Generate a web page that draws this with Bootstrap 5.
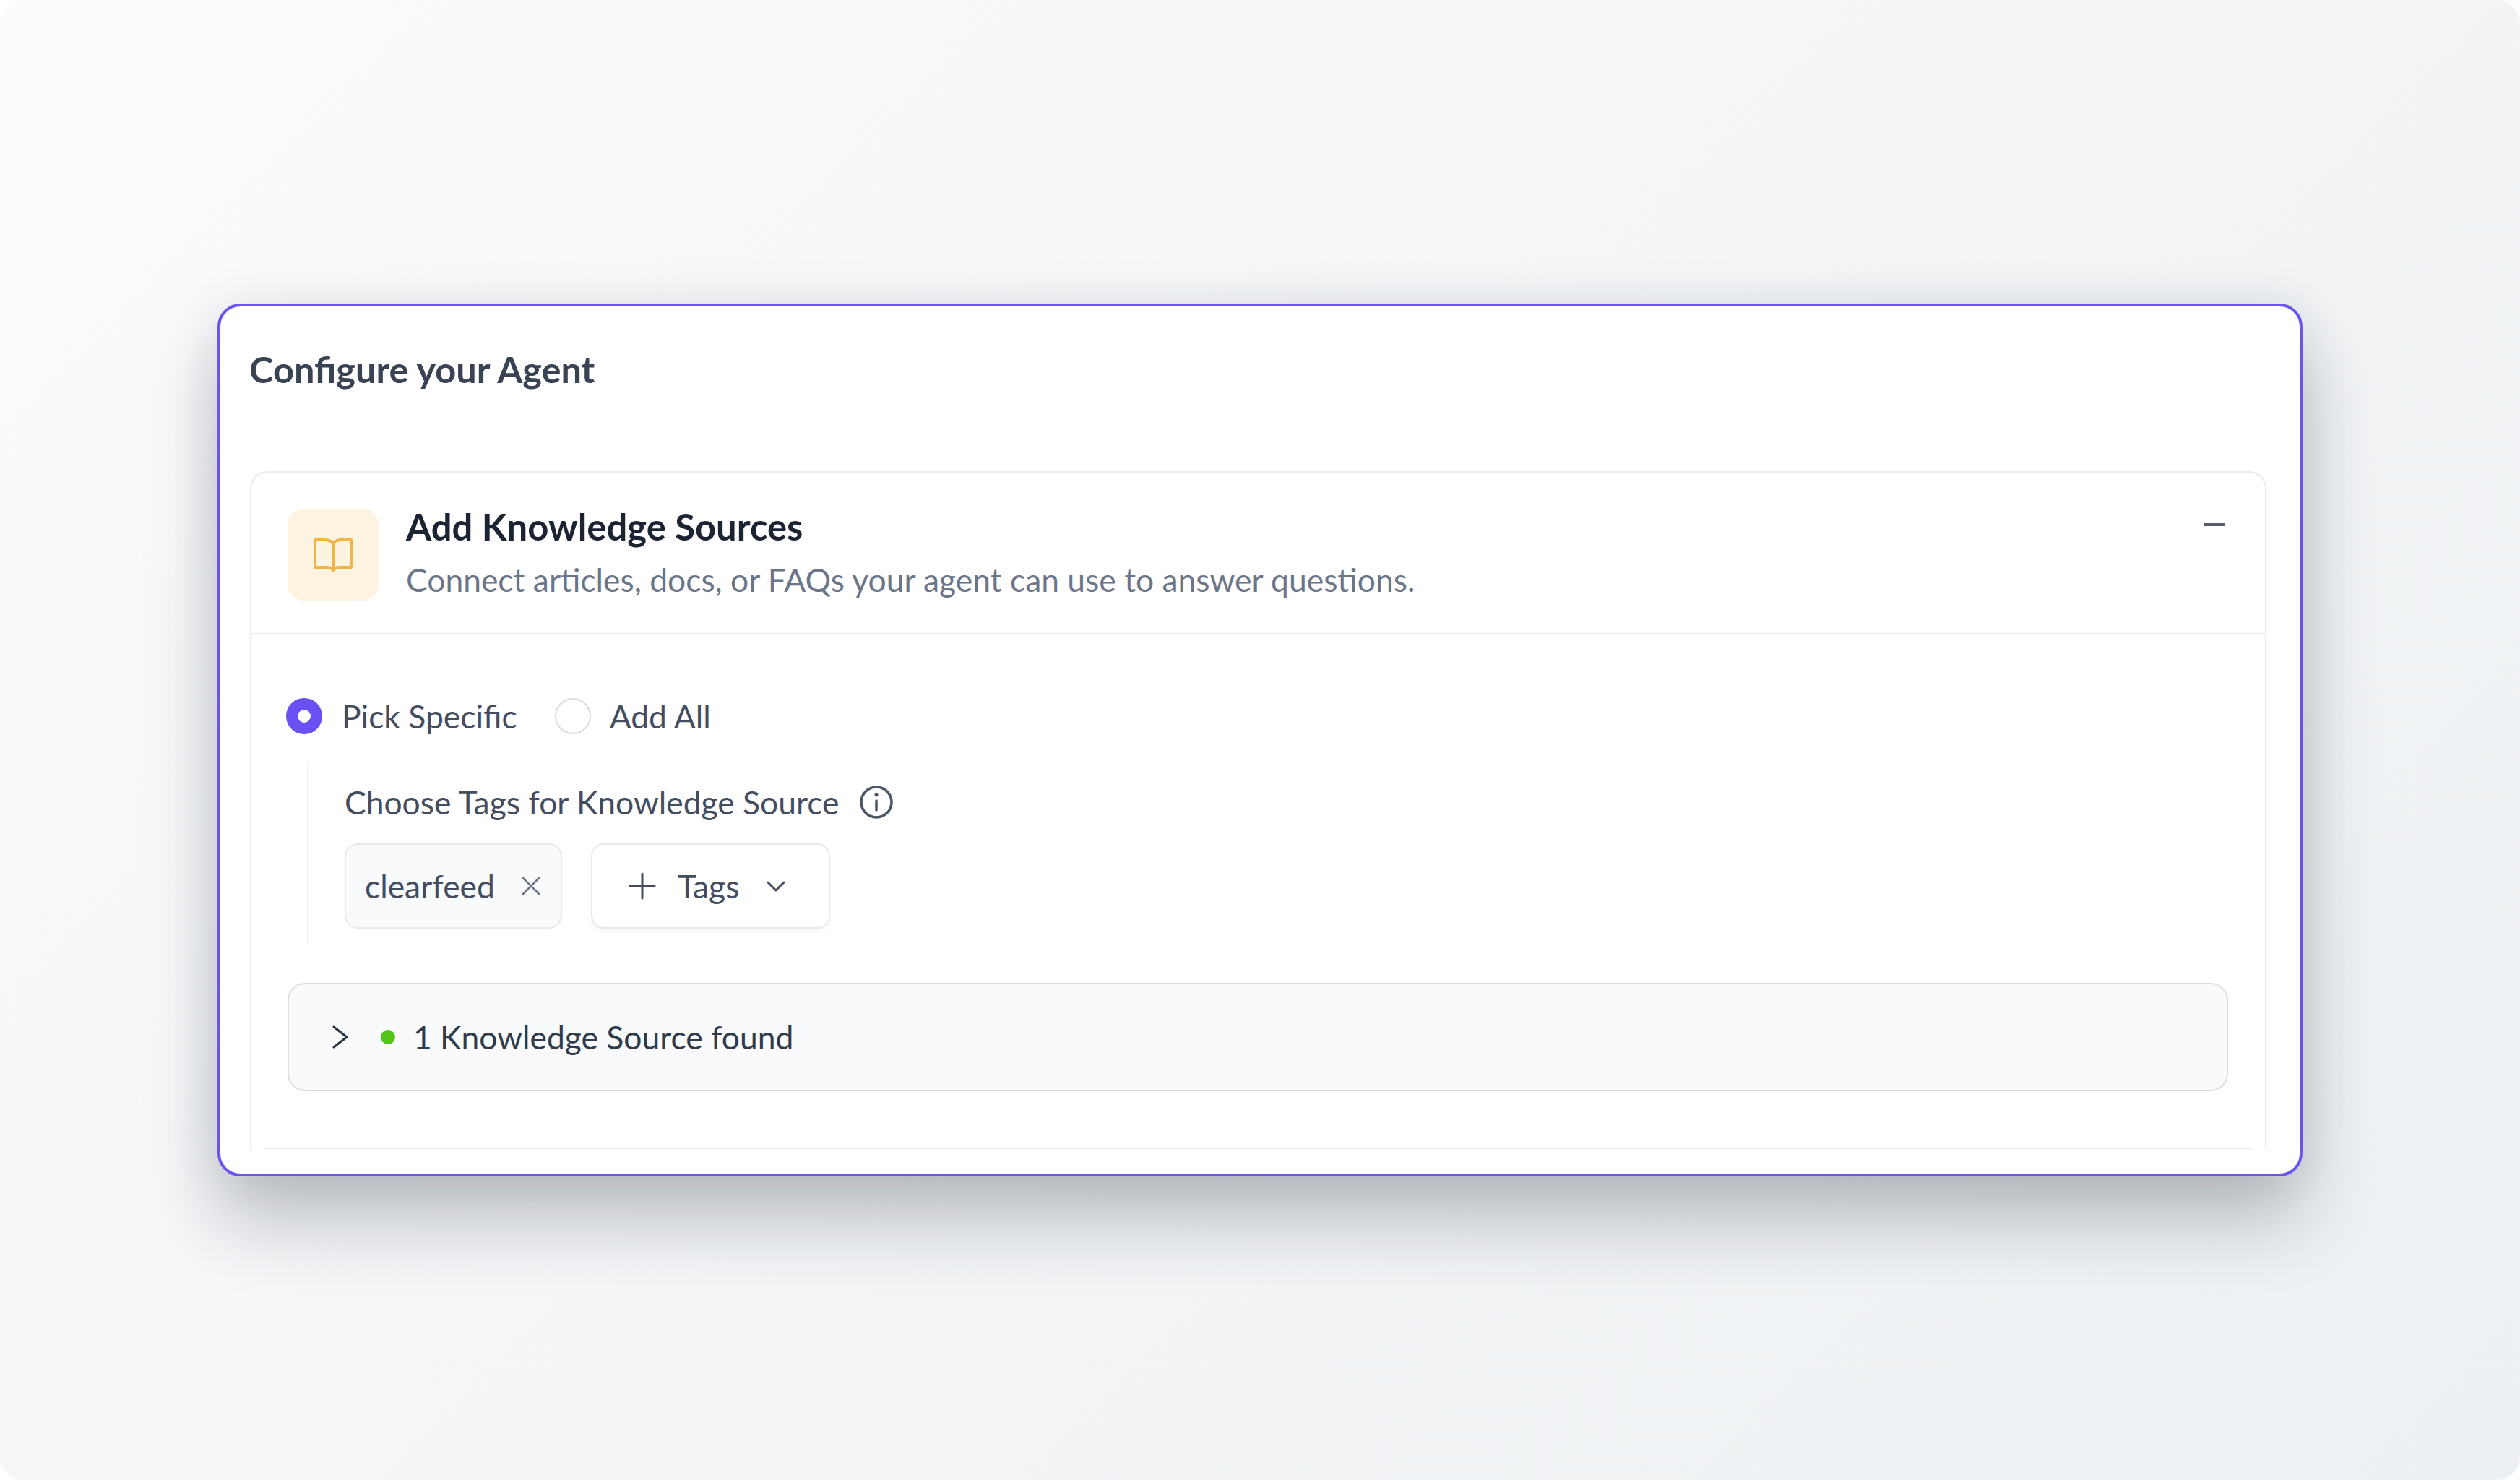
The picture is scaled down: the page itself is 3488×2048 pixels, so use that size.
<!DOCTYPE html>
<html lang="en">
  <head>
    <meta charset="UTF-8" />
    <meta name="viewport" content="width=device-width, initial-scale=1" />
    <title>Configure your Agent</title>
    <link href="https://cdn.jsdelivr.net/npm/bootstrap@5.3.2/dist/css/bootstrap.min.css" rel="stylesheet" />
    <style>
      body {
        background-color: #fff;
        font-family: "Lato", "Liberation Sans", sans-serif;
      }
      .stage {
        height: 2048px;
        border-radius: 32px;
        background: linear-gradient(135deg, #fbfcfd 0%, #f3f5f7 50%, #edf0f2 100%);
      }
      .agent-panel {
        width: 2886px;
        height: 1208px;
        background: #fff;
        border: 4px solid #6b55ec;
        border-radius: 32px;
        padding: 0 46px 0 41px;
        box-shadow: 0 60px 100px rgba(40, 45, 60, 0.28), 0 0 70px rgba(40, 45, 60, 0.08);
      }
      .panel-title {
        height: 228px;
        padding-top: 57px;
        font-size: 50.5px;
        line-height: 60px;
        font-weight: 700;
        color: #3a4354;
        margin: 0 0 0 -1px;
      }
      .source-box {
        position: relative;
        height: 938px;
        border: solid #e9ebee;
        border-width: 2px 2px 0;
        border-top-left-radius: 24px;
        border-top-right-radius: 24px;
      }
      .source-box::after {
        content: "";
        position: absolute;
        left: 18px;
        right: 16px;
        bottom: 0;
        height: 2px;
        background: #e9ebee;
      }
      .source-head {
        height: 224px;
        padding: 50px 55px 0 50px;
        border-bottom: 2px solid #e9ebee;
        gap: 38px;
      }
      .tile {
        width: 126px;
        height: 127px;
        border-radius: 22px;
        background: #fdf3e1;
      }
      .head-text {
        margin-top: -5px;
      }
      .head-title {
        font-size: 50.8px;
        line-height: 60px;
        font-weight: 700;
        color: #1c2333;
        margin: 0 0 15px;
      }
      .head-sub {
        font-size: 44.4px;
        line-height: 56px;
        color: #6b7588;
        margin: 0;
      }
      .minus-mark {
        width: 29px;
        height: 4px;
        background: #585e69;
        margin-top: 20px;
      }
      .source-body {
        padding: 87px 50px 0;
      }
      .radio-row {
        height: 52px;
        margin-left: -2px;
        font-size: 44.4px;
        color: #444d5e;
      }
      .radio-dot {
        width: 50px;
        height: 50px;
        border-radius: 50%;
        margin-right: 27px;
      }
      .radio-on {
        border: 16px solid #6a4ff2;
        background: #fff;
      }
      .radio-off {
        border: 2px solid #d9dbdf;
        background: #fff;
        margin-left: 52px;
        margin-right: 26px;
      }
      .tag-group {
        margin: 36px 0 0 27px;
        padding-left: 50px;
        height: 253px;
        border-left: 2px solid #eceef0;
        color: #444d5e;
        font-size: 44.4px;
      }
      .tag-label {
        height: 56px;
        line-height: 56px;
        margin-top: 30px;
        padding-top: 29px;
        box-sizing: content-box;
      }
      .tag-row {
        margin-top: 29px;
        gap: 40px;
      }
      .tag-chip {
        height: 118px;
        border: 2px solid #e7e9ed;
        border-radius: 18px;
        background: #f8fafc;
        padding: 0 28px 0 26px;
        color: #444d5e;
        font-size: 44.4px;
      }
      .tag-btn {
        background: #fff;
        padding: 0 60px 0 50px;
        box-shadow: 0 4px 8px rgba(30, 40, 60, 0.04);
      }
      .info-mark {
        margin-left: 28px;
      }
      .chip-close {
        margin-left: 37px;
      }
      .tag-word {
        margin: 0 38px 0 30px;
      }
      .found-row {
        width: 2686px;
        height: 150px;
        margin-top: 54px;
        border: 2px solid #dcdee0;
        border-radius: 24px;
        background: #f9fafc;
        padding-left: 59px;
        font-size: 44.4px;
        color: #2f3a4b;
      }
      .live-dot {
        width: 20px;
        height: 20px;
        border-radius: 50%;
        background: #52c41a;
        margin: 0 25px 0 44px;
      }
    </style>
  </head>
  <body class="m-0">
    <div class="stage d-flex align-items-center justify-content-center">
      <div class="agent-panel">
        <h1 class="panel-title">Configure your Agent</h1>
        <div class="source-box">
          <div class="source-head d-flex align-items-start">
            <div class="tile d-flex align-items-center justify-content-center flex-shrink-0">
              <svg width="56" height="46" viewBox="0 0 56 46" fill="none" stroke="#f2b544" stroke-width="4" stroke-linejoin="round" stroke-linecap="round">
                <path d="M28 7C25 3 21 2 16 2H3v38h15c5 0 8 1 10 4 2-3 5-4 10-4h15V2H40c-5 0-9 1-12 5z" />
                <path d="M28 7v37" />
              </svg>
            </div>
            <div class="head-text flex-grow-1">
              <h2 class="head-title">Add Knowledge Sources</h2>
              <p class="head-sub">Connect articles, docs, or FAQs your agent can use to answer questions.</p>
            </div>
            <div class="minus-mark"></div>
          </div>
          <div class="source-body">
            <div class="radio-row d-flex align-items-center">
              <span class="radio-dot radio-on"></span>
              <span>Pick Specific</span>
              <span class="radio-dot radio-off"></span>
              <span>Add All</span>
            </div>
            <div class="tag-group">
              <div class="tag-label d-flex align-items-center">
                <span>Choose Tags for Knowledge Source</span>
                <svg class="info-mark" width="48" height="48" viewBox="0 0 48 48" fill="none" stroke="#4a5568" stroke-width="3.5" stroke-linecap="round">
                  <circle cx="24" cy="24" r="21" />
                  <path d="M24 22v13" />
                  <path d="M24 13.5v.5" stroke-width="5" />
                </svg>
              </div>
              <div class="tag-row d-flex">
                <div class="tag-chip d-flex align-items-center">
                  <span>clearfeed</span>
                  <svg class="chip-close" width="26" height="26" viewBox="0 0 26 26" fill="none" stroke="#6b7280" stroke-width="2.5" stroke-linecap="round">
                    <path d="M2 2l22 22M24 2L2 24" />
                  </svg>
                </div>
                <div class="tag-chip tag-btn d-flex align-items-center">
                  <svg width="38" height="38" viewBox="0 0 38 38" fill="none" stroke="#444d5e" stroke-width="3" stroke-linecap="round">
                    <path d="M19 2v34M2 19h34" />
                  </svg>
                  <span class="tag-word">Tags</span>
                  <svg width="26" height="16" viewBox="0 0 26 16" fill="none" stroke="#444d5e" stroke-width="3" stroke-linecap="round" stroke-linejoin="round">
                    <path d="M2 3l11 11L24 3" />
                  </svg>
                </div>
              </div>
            </div>
            <div class="found-row d-flex align-items-center">
              <svg width="24" height="32" viewBox="0 0 24 32" fill="none" stroke="#2a3342" stroke-width="3" stroke-linecap="round" stroke-linejoin="round">
                <path d="M3 2l18 14L3 30" />
              </svg>
              <span class="live-dot"></span>
              <span>1 Knowledge Source found</span>
            </div>
          </div>
        </div>
      </div>
    </div>
    <script src="https://cdn.jsdelivr.net/npm/bootstrap@5.3.2/dist/js/bootstrap.bundle.min.js"></script>
  </body>
</html>
